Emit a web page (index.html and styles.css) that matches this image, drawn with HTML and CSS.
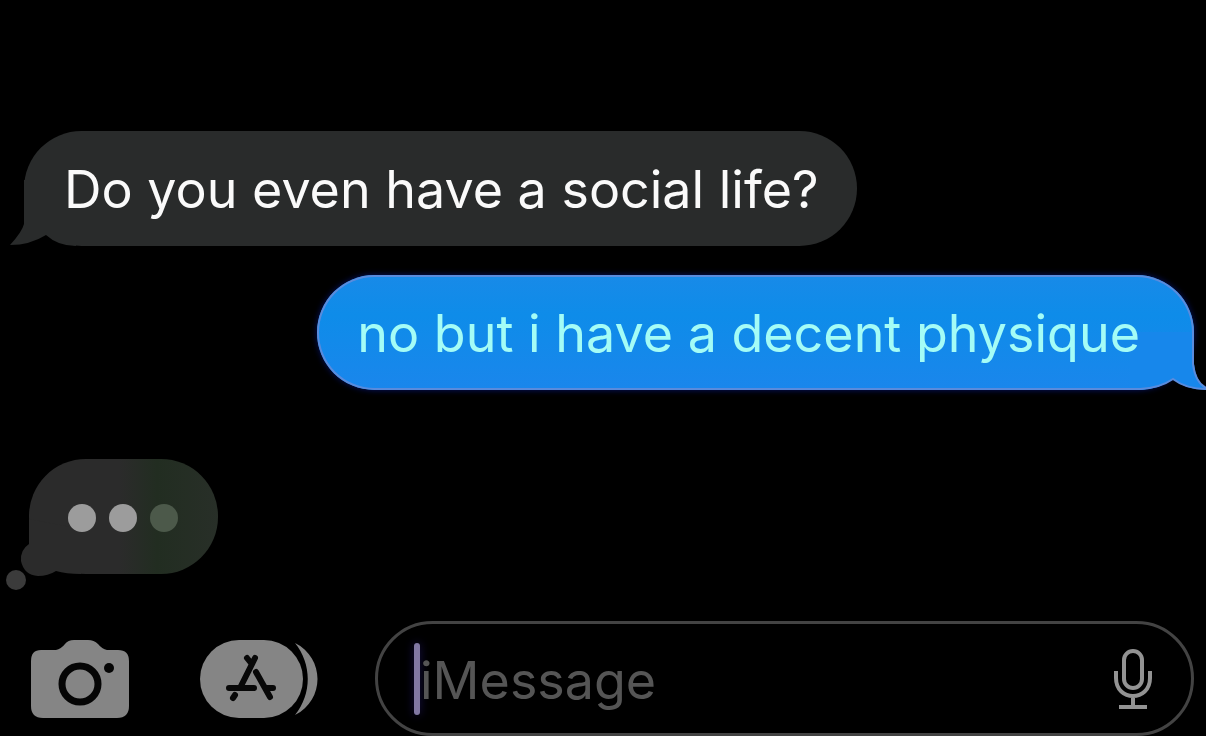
FILE: index.html
```html
<!DOCTYPE html>
<html lang="en">
<head>
<meta charset="utf-8">
<title>Messages</title>
<link rel="stylesheet" href="styles.css">
</head>
<body>
<main class="thread">
  <div class="bubble received">
    <svg class="tail tail-left" viewBox="0 0 66 66" width="66" height="66" aria-hidden="true"><path d="M14 0V44Q12 52 0 65Q20 65 36 55Q48 66 66 66V0Z"/></svg>
    <p class="text">Do you even have a social life?</p>
  </div>
  <div class="bubble sent">
    <svg class="tail tail-right" viewBox="0 0 76 66" width="76" height="66" aria-hidden="true"><path class="tail-fill" d="M0 8H64V40Q66 58 76 64V66Q56 66 43 55Q30 65 10 66H0Z"/><path class="tail-edge" d="M63 8V40Q65 58 76 64M76 65Q56 65 43 55Q30 64 10 65H0"/></svg>
    <p class="text">no but i have a decent physique</p>
  </div>
  <div class="typing" role="status" aria-label="Typing">
    <svg class="puff" viewBox="0 0 80 82" width="80" height="82" aria-hidden="true"><path d="M23 10V35Q14 41 15 52Q18 66 32 67Q42 67 50 62Q60 65 75 65V20Z"/><circle cx="10" cy="71" r="10"/></svg>
    <span class="dot"></span><span class="dot"></span><span class="dot dim"></span>
  </div>
</main>
<form class="composer">
  <button class="icon-button" type="button" aria-label="Camera">
    <svg viewBox="0 0 98 78" width="98" height="78"><path fill="#858585" d="M10 10H25Q30 9 34 4Q37 0 43 0H57Q63 0 67 4Q71 9 76 10H87Q98 10 98 21V66Q98 78 86 78H12Q0 78 0 66V21Q0 10 10 10Z"/><circle cx="49" cy="44" r="18" fill="none" stroke="#050505" stroke-width="7"/><circle cx="78" cy="28" r="5" fill="#050505"/></svg>
  </button>
  <button class="icon-button" type="button" aria-label="Apps">
    <svg viewBox="0 0 118 78" width="118" height="78"><path fill="#858585" d="M95 3C125 18 125 60 95 75C112 54 112 24 95 3Z"/><rect width="103" height="78" rx="39" fill="#858585"/><g fill="none" stroke="#080808" stroke-width="6" stroke-linecap="round"><path d="M55 18L41 46M47 18L51 23M56 32L70 57M29 48H54M66 48H73M35 55L33 58"/></g></svg>
  </button>
  <div class="field">
    <span class="caret" aria-hidden="true"></span>
    <input class="input" type="text" placeholder="iMessage" aria-label="iMessage">
    <button class="icon-button" type="button" aria-label="Dictate">
      <svg viewBox="0 0 40 62" width="40" height="62" fill="none" stroke="#939393" stroke-width="4"><rect x="11" y="3" width="18" height="37" rx="9"/><path d="M3 23V30C3 54 37 54 37 30V23M20 48V59M6 59H34"/></svg>
    </button>
  </div>
</form>
</body>
</html>
```
FILE: styles.css
```css
* { box-sizing: border-box; }

body {
  margin: 0;
  min-height: 100vh;
  display: flex;
  flex-direction: column;
  overflow: hidden;
  background: #000;
  font-family: Inter, "Liberation Sans", sans-serif;
  font-size: 52px;
}

.thread {
  flex: 1;
  display: flex;
  flex-direction: column;
  align-items: flex-start;
  padding: 131px 12px 0 24px;
}

.bubble {
  position: relative;
  padding: 27px 38px 24px 40px;
  border-radius: 58px;
}

.text {
  position: relative;
  margin: 0;
  line-height: 64px;
  white-space: nowrap;
}

.received {
  background: #292b2b;
  color: #fafafa;
}

.sent {
  align-self: flex-end;
  margin-top: 29px;
  padding-right: 54px;
  background: linear-gradient(#188ae8, #0e8ce9 35%, #1a86ec);
  box-shadow: inset 0 0 0 2px #5a8bdc, 0 0 6px #06146a;
  color: #a4fcf6;
}

.tail {
  position: absolute;
  bottom: 0;
}

.tail-left {
  left: -14px;
  fill: #292b2b;
}

.tail-right { right: -12px; }
.tail-fill { fill: #1787eb; }

.tail-edge {
  fill: none;
  stroke: #5a8bdc;
  stroke-width: 2;
}

.typing {
  position: relative;
  display: flex;
  align-items: center;
  gap: 13px;
  height: 115px;
  margin: 69px 0 0 5px;
  padding: 2px 40px 0 39px;
  border-radius: 57px;
  background: linear-gradient(90deg, #2b2b2b 48%, #222d21 68%, #282f28);
}

.puff {
  position: absolute;
  left: -23px;
  bottom: -17px;
  fill: #2b2b2b;
}

.puff circle { fill: #3b3b3b; }

.dot {
  position: relative;
  width: 28px;
  height: 28px;
  border-radius: 50%;
  background: #9c9c9c;
}

.dim { background: #4c594a; }

.composer {
  display: flex;
  align-items: center;
  padding: 0 12px 0 31px;
}

.icon-button {
  flex: none;
  display: flex;
  margin: 0;
  padding: 0;
  border: 0;
  background: none;
}

.icon-button + .icon-button { margin-left: 71px; }

.field {
  flex: 1;
  display: flex;
  align-items: center;
  min-width: 0;
  height: 115px;
  margin-left: 57px;
  padding: 0 38px 0 36px;
  border: 3px solid #434343;
  border-radius: 58px;
}

.caret {
  width: 6px;
  height: 72px;
  border-radius: 3px;
  background: #8178a3;
  box-shadow: 0 0 10px #17104a;
}

.input {
  flex: 1;
  min-width: 0;
  padding: 4px 0 0;
  border: 0;
  outline: 0;
  background: none;
  color: #fff;
  font: inherit;
}

.input::placeholder {
  color: #555;
  opacity: 1;
}
```
